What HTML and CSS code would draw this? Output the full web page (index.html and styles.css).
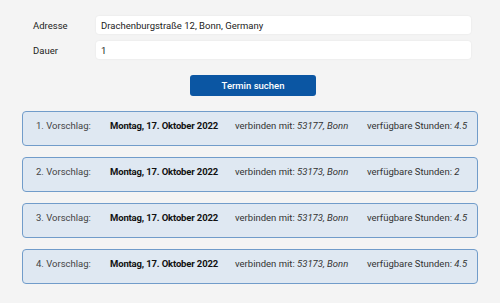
FILE: index.html
```html
<!DOCTYPE html>
<html lang="de">
<head>
<meta charset="UTF-8">
<title>Termin suchen</title>
<link rel="stylesheet" href="styles.css">
</head>
<body>
    <div class="form">
        <div class="form-row">
            <label for="adresse">Adresse</label>
            <input type="text" id="adresse" class="text-input" value="Drachenburgstraße 12, Bonn, Germany">
        </div>
        <div class="form-row">
            <label for="dauer">Dauer</label>
            <input type="text" id="dauer" class="text-input" value="1">
        </div>
        <button type="button" class="search-button">Termin suchen</button>
    </div>

    <div class="results">
        <div class="card">
            <span class="nr">1. Vorschlag:</span>
            <span class="date">Montag, 17. Oktober 2022</span>
            <span>verbinden mit: <em>53177, Bonn</em></span>
            <span>verfügbare Stunden: <em>4.5</em></span>
        </div>
        <div class="card">
            <span class="nr">2. Vorschlag:</span>
            <span class="date">Montag, 17. Oktober 2022</span>
            <span>verbinden mit: <em>53173, Bonn</em></span>
            <span>verfügbare Stunden: <em>2</em></span>
        </div>
        <div class="card">
            <span class="nr">3. Vorschlag:</span>
            <span class="date">Montag, 17. Oktober 2022</span>
            <span>verbinden mit: <em>53173, Bonn</em></span>
            <span>verfügbare Stunden: <em>4.5</em></span>
        </div>
        <div class="card">
            <span class="nr">4. Vorschlag:</span>
            <span class="date">Montag, 17. Oktober 2022</span>
            <span>verbinden mit: <em>53173, Bonn</em></span>
            <span>verfügbare Stunden: <em>4.5</em></span>
        </div>
    </div>
</body>
</html>
```

FILE: styles.css
```css
body {
    margin: 0;
    padding: 16px 22px 0 22px;
    background: #f4f4f4;
    font-family: Roboto, "Liberation Sans", sans-serif;
    font-size: 9.5px;
    color: #222;
}

.form {
    display: flex;
    flex-direction: column;
    gap: 7px;
}

.form-row {
    display: flex;
    align-items: center;
    padding-left: 11px;
}

label {
    width: 63px;
    color: #222;
}

.text-input {
    width: 375px;
    height: 18px;
    box-sizing: border-box;
    border: none;
    outline: none;
    border-radius: 3px;
    background: #fff;
    box-shadow: 0 0 2px rgba(0, 0, 0, 0.08);
    padding: 0 5px;
    font-family: Roboto, "Liberation Sans", sans-serif;
    font-size: 9.5px;
    color: #222;
}

.search-button {
    align-self: center;
    margin: 9px 0 0 6px;
    width: 126px;
    height: 21px;
    border: none;
    border-radius: 3px;
    background: #0b56a3;
    color: #fff;
    font-family: Roboto, "Liberation Sans", sans-serif;
    font-size: 9.5px;
    font-weight: 500;
}

.results {
    display: flex;
    flex-direction: column;
    gap: 11px;
    margin-top: 15px;
}

.card {
    display: grid;
    grid-template-columns: 74px 125px 132px auto;
    height: 35px;
    box-sizing: border-box;
    padding: 7px 13px 0 13px;
    line-height: 13px;
    white-space: nowrap;
    background: #dfe8f2;
    border: 1.5px solid #719cca;
    border-radius: 4px;
    color: #333;
}

.nr {
    color: #444;
}

.date {
    font-weight: bold;
    letter-spacing: -0.15px;
    color: #111;
}

em {
    font-style: italic;
}
```
